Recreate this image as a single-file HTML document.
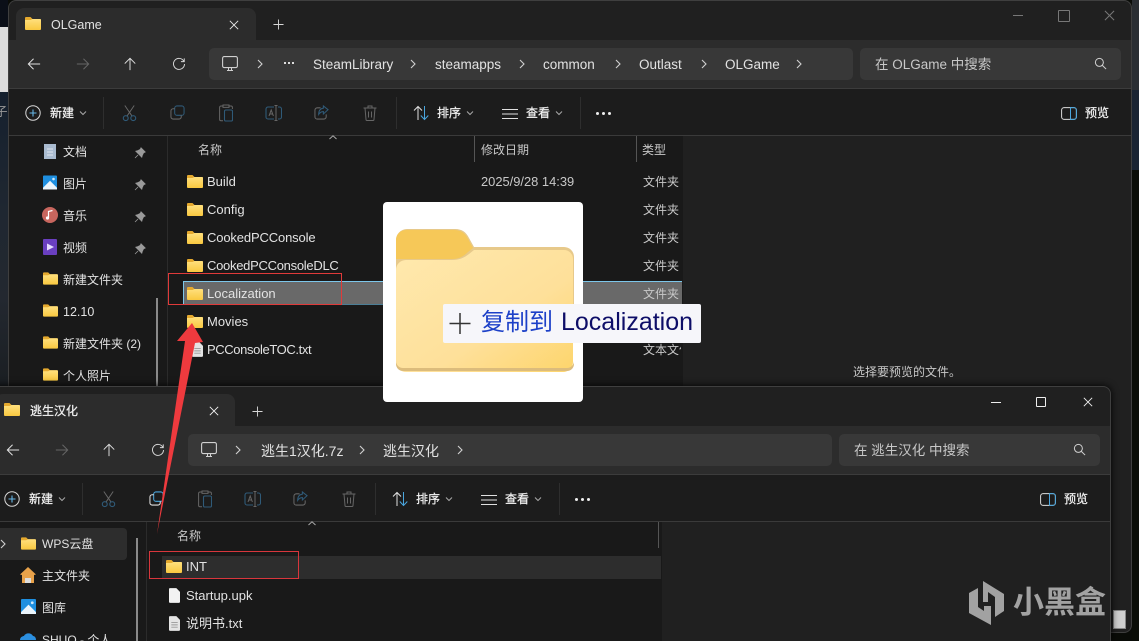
<!DOCTYPE html>
<html lang="zh-CN"><head><meta charset="utf-8"><title>Explorer</title>
<style>
html,body{margin:0;padding:0;width:1139px;height:641px;overflow:hidden;background:#0a0c08}
body{position:relative;font-family:"Liberation Sans","Noto Sans CJK SC",sans-serif;font-size:12.5px;color:#dcdcdc}
.a{position:absolute}
.t{position:absolute;white-space:nowrap;line-height:18px;transform:translateY(-8px)}
.win{position:absolute;width:1124px;height:633px;background:#202020;border:1px solid #3f3f3f;box-sizing:border-box;border-radius:8px;overflow:hidden}
.win>*{margin-left:-1px;margin-top:-1px}
.tab{position:absolute;left:8px;top:8px;width:240px;height:32px;background:#2c2c2c;border-radius:8px 8px 0 0}
.nav{position:absolute;left:0;top:40px;width:1124px;height:48px;background:#2c2c2c;border-bottom:1px solid #3c3c3c}
.tool{position:absolute;left:0;top:89px;width:1124px;height:46px;background:#1c1c1c;border-bottom:1px solid #3a3a3a}
.side{position:absolute;left:0;top:136px;width:159px;height:496px;background:#191919;border-right:1px solid #2b2b2b}
.list{position:absolute;left:160px;top:136px;width:515px;height:496px;background:#191919}
.box{position:absolute;top:48px;height:32px;background:#383838;border-radius:5px}
.sep{position:absolute;width:1px;height:32px;top:97px;background:#2e2e2e}
svg.i{position:absolute;overflow:visible;fill:none}
.hd{position:absolute;width:1px;height:26px;top:136px;background:#555}
.b{font-size:13px;color:#e2e2e2}
.p{font-size:13.5px;color:#e2e2e2}
.s{font-size:12px;color:#e2e2e2}
.t.k{font-size:12px;color:#f0f0f0;-webkit-text-stroke:.25px #f0f0f0;transform:translateY(-9px)}
.dim{color:#c8c8c8}
.dots{position:absolute;width:2px;height:2px;background:#ddd;box-shadow:4px 0 #ddd,8px 0 #ddd}
</style></head><body>
<svg width="0" height="0" style="position:absolute">
<defs>
<linearGradient id="fg" x1="0" y1="0" x2="0" y2="1"><stop offset="0" stop-color="#ffe07e"/><stop offset="1" stop-color="#f9c840"/></linearGradient>
<linearGradient id="bigf" x1="0" y1="0" x2="1" y2="1"><stop offset="0" stop-color="#ffe9ae"/><stop offset=".6" stop-color="#fee09a"/><stop offset="1" stop-color="#fdd56b"/></linearGradient>
<symbol id="folder" viewBox="0 0 16 13"><path d="M0 1a1 1 0 0 1 1-1h4.500l2 2H15a1 1 0 0 1 1 1v3H0z" fill="#e5a92e"/><path d="M0 3h5.500L7.500 2H15a1 1 0 0 1 1 1v9a1 1 0 0 1-1 1H1a1 1 0 0 1-1-1z" fill="url(#fg)"/></symbol>
<symbol id="back" viewBox="0 0 16 16"><path d="M15 8H1.500M7.500 2 1.500 8l6 6" stroke="currentColor" stroke-width="1.100" fill="none"/></symbol>
<symbol id="fwd" viewBox="0 0 16 16"><path d="M1 8h13.500M8.500 2l6 6-6 6" stroke="currentColor" stroke-width="1.100" fill="none"/></symbol>
<symbol id="up" viewBox="0 0 16 16"><path d="M8 15V1.500M2 7.500l6-6 6 6" stroke="currentColor" stroke-width="1.100" fill="none"/></symbol>
<symbol id="ref" viewBox="0 0 16 16"><path d="M13.600 5A6.300 6.300 0 1 0 14.300 8M14 1.500V5.300h-3.800" stroke="currentColor" stroke-width="1.100" fill="none"/></symbol>
<symbol id="mon" viewBox="0 0 16 16"><rect x=".6" y=".6" width="14.800" height="11" rx="1.600" stroke="#d0d0d0" stroke-width="1.100" fill="none"/><path d="M5 14.500h6M6.500 12v2M9.500 12v2" stroke="#d0d0d0" fill="none"/></symbol>
<symbol id="chev" viewBox="0 0 8 10"><path d="M2 1l4 4-4 4" stroke="#d0d0d0" stroke-width="1.100" fill="none"/></symbol>
<symbol id="dn" viewBox="0 0 8 8"><path d="M1 2.500l3 3 3-3" stroke="#a8a8a8" fill="none"/></symbol>
<symbol id="x" viewBox="0 0 12 12"><path d="M1 1l10 10M11 1 1 11" stroke="currentColor" stroke-width="1.100" fill="none"/></symbol>
<symbol id="plus" viewBox="0 0 12 12"><path d="M6 .5v11M.5 6h11" stroke="#d8d8d8" fill="none"/></symbol>
<symbol id="search" viewBox="0 0 14 14"><circle cx="5.800" cy="5.800" r="4.300" stroke="#d0d0d0" stroke-width="1.100" fill="none"/><path d="M9 9l4 4" stroke="#d0d0d0" stroke-width="1.100"/></symbol>
<symbol id="new" viewBox="0 0 16 16"><circle cx="8" cy="8" r="7.200" stroke="#d8d8d8" stroke-width="1" fill="none"/><path d="M8 4.500v7M4.500 8h7" stroke="#66b6e6" stroke-width="1.100"/></symbol>
<symbol id="cut" viewBox="0 0 16 18"><path d="M3 1l7.500 11M13 1 5.500 12" stroke="#6a6a6a" fill="none"/><circle cx="4" cy="14.500" r="2.600" stroke="#2f5a78" stroke-width="1.200" fill="none"/><circle cx="12" cy="14.500" r="2.600" stroke="#2f5a78" stroke-width="1.200" fill="none"/></symbol>
<symbol id="copy" viewBox="0 0 16 16"><rect x="5" y="1" width="10" height="10" rx="2.400" stroke="#2f5a78" stroke-width="1.100" fill="none"/><path d="M5 4H3.400A2.400 2.400 0 0 0 1 6.400v6.200A2.400 2.400 0 0 0 3.400 15h6.200a2.400 2.400 0 0 0 2.400-2.400V11" stroke="#666" stroke-width="1.100" fill="none"/></symbol>
<symbol id="copy2" viewBox="0 0 16 16"><rect x="5" y="1" width="10" height="10" rx="2.400" stroke="#4aa6de" stroke-width="1.100" fill="none"/><path d="M5 4H3.400A2.400 2.400 0 0 0 1 6.400v6.200A2.400 2.400 0 0 0 3.400 15h6.200a2.400 2.400 0 0 0 2.400-2.400V11" stroke="#e0e0e0" stroke-width="1.100" fill="none"/></symbol>
<symbol id="paste" viewBox="0 0 14 18"><path d="M4 2H2a1.400 1.400 0 0 0-1.400 1.400v12A1.400 1.400 0 0 0 2 16.800h2M4 1h6v2.400H4zM10 2h2a1.400 1.400 0 0 1 1.400 1.400V5" stroke="#666" fill="none"/><rect x="5.500" y="6" width="8" height="11" rx="1.300" stroke="#2f5a78" stroke-width="1.100" fill="none"/></symbol>
<symbol id="ren" viewBox="0 0 17 16"><path d="M9 2H3a2 2 0 0 0-2 2v8a2 2 0 0 0 2 2h6M13 2h1.500a2 2 0 0 1 2 2v8a2 2 0 0 1-2 2H13" stroke="#2f5a78" stroke-width="1.100" fill="none"/><path d="M9.500.5h3M11 .5v15M9.500 15.500h3M4 11l2.200-6L8.400 11M4.800 9h2.800" stroke="#666" fill="none"/></symbol>
<symbol id="share" viewBox="0 0 16 16"><path d="M7 3H3.500A2.500 2.500 0 0 0 1 5.500v7A2.500 2.500 0 0 0 3.500 15h7A2.500 2.500 0 0 0 13 12.500V10" stroke="#666" stroke-width="1.100" fill="none"/><path d="M15 5 10 1v2.400C6.500 3.800 5 6.500 5 10c1.500-2.300 3-3 5-3v2.600z" stroke="#2f5a78" stroke-width="1.100" fill="none"/></symbol>
<symbol id="del" viewBox="0 0 14 16"><path d="M.5 3h13M5 3V1h4v2M2 3l1 11.500a1 1 0 0 0 1 1h6a1 1 0 0 0 1-1L12 3M5.500 6.500v6M8.500 6.500v6" stroke="#666" fill="none"/></symbol>
<symbol id="sort" viewBox="0 0 17 16"><path d="M5 15V1.500M1 5.500l4-4 4 4" stroke="#e0e0e0" fill="none"/><path d="M11.500 1v13.500M7.800 10.500l3.700 4 3.800-4" stroke="#4aa6de" fill="none"/></symbol>
<symbol id="view" viewBox="0 0 16 12"><path d="M0 1.500h16M0 6h16M0 10.500h16" stroke="#e0e0e0" stroke-width="1.100"/></symbol>
<symbol id="prev" viewBox="0 0 16 13"><rect x=".6" y=".6" width="14.800" height="11.800" rx="2.500" stroke="#dcdcdc" stroke-width="1" fill="none"/><path d="M9.500.6h3.500a2.400 2.400 0 0 1 2.400 2.400v7a2.400 2.400 0 0 1-2.400 2.400H9.500z" stroke="#4aa6de" stroke-width="1" fill="none"/></symbol>
<symbol id="pin" viewBox="0 0 12 12"><path d="M7 .8 11.200 5 9.600 5.700 8.200 8.600 7.800 10.200 1.800 4.200 3.400 3.800 6.300 2.400z M4 8 1 11" fill="#9a9a9a" stroke="#9a9a9a" stroke-width=".8"/></symbol>
<symbol id="doc" viewBox="0 0 12 16"><path d="M0 1a1 1 0 0 1 1-1h7l4 4v11a1 1 0 0 1-1 1H1a1 1 0 0 1-1-1z" fill="#e4e4e4"/><path d="M2.500 7h7M2.500 9.500h7M2.500 12h7" stroke="#999"/></symbol>
<symbol id="file" viewBox="0 0 12 16"><path d="M0 1a1 1 0 0 1 1-1h7l4 4v11a1 1 0 0 1-1 1H1a1 1 0 0 1-1-1z" fill="#f2f2f2"/></symbol>
<symbol id="pic" viewBox="0 0 16 16"><rect width="16" height="16" rx="1" fill="#1e8fe0"/><path d="M0 14 8 6l8 8v2H0z" fill="#eaf4fb"/><circle cx="12" cy="4" r="1.500" fill="#cfe8fa"/></symbol>
</defs>
</svg>

<!-- background slivers -->
<div class="a" style="left:0;top:0;width:8px;height:27px;background:#0b0f18"></div>
<div class="a" style="left:0;top:27px;width:8px;height:65px;background:#dcdcdc"></div>
<div class="a" style="left:0;top:92px;width:8px;height:295px;background:linear-gradient(#15202e,#1f2731 40%,#232830 70%,#1a1e22)"></div>
<div class="t" style="left:-5px;top:111px;color:#999">子</div>
<div class="a" style="left:1132px;top:0;width:7px;height:90px;background:#2a2e33"></div>
<div class="a" style="left:1132px;top:90px;width:7px;height:80px;background:#1a2433"></div>
<div class="a" style="left:1132px;top:170px;width:7px;height:471px;background:#0a0d07"></div>

<!-- WINDOW 1 -->
<div class="win" style="left:8px;top:0">
 <div class="tab"></div>
 <svg class="i" style="left:17px;top:17px" width="16" height="13"><use href="#folder"/></svg>
 <div class="t b" style="left:43px;top:24px;font-size:12.500px">OLGame</div>
 <svg class="i" style="left:221px;top:20px;color:#e8e8e8" width="10" height="10"><use href="#x"/></svg>
 <svg class="i" style="left:265px;top:19px" width="11" height="11"><use href="#plus"/></svg>
 <div class="a" style="left:1005px;top:15px;width:10px;height:1px;background:#777"></div>
 <div class="a" style="left:1050px;top:10px;width:10px;height:10px;border:1px solid #777;border-radius:1px"></div>
 <svg class="i" style="left:1096px;top:10px;color:#777" width="11" height="11"><use href="#x"/></svg>
 <div class="nav"></div>
 <svg class="i" style="left:19px;top:57px;color:#e0e0e0" width="14" height="14"><use href="#back"/></svg>
 <svg class="i" style="left:68px;top:57px;color:#666" width="14" height="14"><use href="#fwd"/></svg>
 <svg class="i" style="left:115px;top:57px;color:#e0e0e0" width="14" height="14"><use href="#up"/></svg>
 <svg class="i" style="left:164px;top:57px;color:#d8d8d8" width="14" height="14"><use href="#ref"/></svg>
 <div class="box" style="left:201px;width:644px"></div>
 <div class="box" style="left:852px;width:261px"></div>
 <svg class="i" style="left:214px;top:56px" width="16" height="16"><use href="#mon"/></svg>
 <svg class="i" style="left:248px;top:59px" width="8" height="10"><use href="#chev"/></svg>
 <div class="dots" style="left:276px;top:62px"></div>
 <div class="t p" style="left:305px;top:64px">SteamLibrary</div>
 <svg class="i" style="left:401px;top:59px" width="8" height="10"><use href="#chev"/></svg>
 <div class="t p" style="left:427px;top:64px">steamapps</div>
 <svg class="i" style="left:510px;top:59px" width="8" height="10"><use href="#chev"/></svg>
 <div class="t p" style="left:535px;top:64px">common</div>
 <svg class="i" style="left:606px;top:59px" width="8" height="10"><use href="#chev"/></svg>
 <div class="t p" style="left:631px;top:64px">Outlast</div>
 <svg class="i" style="left:692px;top:59px" width="8" height="10"><use href="#chev"/></svg>
 <div class="t p" style="left:717px;top:64px">OLGame</div>
 <svg class="i" style="left:787px;top:59px" width="8" height="10"><use href="#chev"/></svg>
 <div class="t dim" style="left:867px;top:64px;font-size:13.500px">在 OLGame 中搜索</div>
 <svg class="i" style="left:1086px;top:57px" width="13" height="13"><use href="#search"/></svg>
 <div class="tool"></div>
 <svg class="i" style="left:17px;top:105px" width="16" height="16"><use href="#new"/></svg>
 <div class="t k" style="left:42px;top:113px">新建</div>
 <svg class="i" style="left:71px;top:109px" width="8" height="8"><use href="#dn"/></svg>
 <div class="sep" style="left:95px"></div>
 <svg class="i" style="left:114px;top:104px" width="15" height="18"><use href="#cut"/></svg>
 <svg class="i" style="left:162px;top:105px" width="15" height="15"><use href="#copy"/></svg>
 <svg class="i" style="left:211px;top:104px" width="14" height="18"><use href="#paste"/></svg>
 <svg class="i" style="left:257px;top:105px" width="17" height="16"><use href="#ren"/></svg>
 <svg class="i" style="left:306px;top:105px" width="15" height="15"><use href="#share"/></svg>
 <svg class="i" style="left:355px;top:105px" width="14" height="16"><use href="#del"/></svg>
 <div class="sep" style="left:388px"></div>
 <svg class="i" style="left:405px;top:105px" width="17" height="16"><use href="#sort"/></svg>
 <div class="t k" style="left:429px;top:113px">排序</div>
 <svg class="i" style="left:458px;top:109px" width="8" height="8"><use href="#dn"/></svg>
 <svg class="i" style="left:494px;top:108px" width="16" height="12"><use href="#view"/></svg>
 <div class="t k" style="left:518px;top:113px">查看</div>
 <svg class="i" style="left:547px;top:109px" width="8" height="8"><use href="#dn"/></svg>
 <div class="sep" style="left:572px"></div>
 <div class="a" style="left:588px;top:112px;width:3px;height:3px;background:#eee;border-radius:2px;box-shadow:6px 0 #eee,12px 0 #eee"></div>
 <svg class="i" style="left:1053px;top:107px" width="16" height="13"><use href="#prev"/></svg>
 <div class="t k" style="left:1077px;top:113px">预览</div>
 <div class="side"></div>
 <div class="list"></div>
 <svg class="i" style="left:321px;top:135px" width="8" height="5"><path d="M.5 4 4 .8 7.500 4" stroke="#aaa"/></svg>
 <div class="t dim" style="left:190px;top:149px;font-size:12px">名称</div>
 <div class="hd" style="left:466px"></div>
 <div class="t dim" style="left:473px;top:149px;font-size:12px">修改日期</div>
 <div class="hd" style="left:628px"></div>
 <div class="t dim" style="left:634px;top:149px;font-size:12px">类型</div>
 <!-- sidebar -->
 <svg class="i" style="left:36px;top:143px" width="12" height="16"><path d="M0 1h12v15H0z" fill="#a9bbd0"/><path d="M3 6h6M3 9h6M3 12h6" stroke="#dfe6ee"/></svg>
 <div class="t s" style="left:55px;top:151px">文档</div>
 <svg class="i" style="left:126px;top:147px" width="12" height="12"><use href="#pin"/></svg>
 <svg class="i" style="left:35px;top:175px" width="14" height="15"><use href="#pic"/></svg>
 <div class="t s" style="left:55px;top:183px">图片</div>
 <svg class="i" style="left:126px;top:179px" width="12" height="12"><use href="#pin"/></svg>
 <svg class="i" style="left:34px;top:207px" width="16" height="16"><circle cx="8" cy="8" r="8" fill="#c8665e"/><path d="M6.500 11V4.500l4-1" stroke="#fff" stroke-width="1.200"/><circle cx="5.500" cy="11" r="1.600" fill="#fff"/></svg>
 <div class="t s" style="left:55px;top:215px">音乐</div>
 <svg class="i" style="left:126px;top:211px" width="12" height="12"><use href="#pin"/></svg>
 <svg class="i" style="left:35px;top:239px" width="14" height="16"><rect width="14" height="16" rx="1" fill="#6a3fc0"/><path d="M4 4.500 11 8l-7 3.500z" fill="#e6dcff"/></svg>
 <div class="t s" style="left:55px;top:247px">视频</div>
 <svg class="i" style="left:126px;top:243px" width="12" height="12"><use href="#pin"/></svg>
 <svg class="i" style="left:35px;top:272px" width="15" height="13"><use href="#folder"/></svg>
 <div class="t s" style="left:55px;top:279px">新建文件夹</div>
 <svg class="i" style="left:35px;top:304px" width="15" height="13"><use href="#folder"/></svg>
 <div class="t s" style="left:55px;top:311px;font-size:12.500px">12.10</div>
 <svg class="i" style="left:35px;top:336px" width="15" height="13"><use href="#folder"/></svg>
 <div class="t s" style="left:55px;top:343px">新建文件夹 (2)</div>
 <svg class="i" style="left:35px;top:368px" width="15" height="13"><use href="#folder"/></svg>
 <div class="t s" style="left:55px;top:375px">个人照片</div>
 <div class="a" style="left:148px;top:298px;width:2px;height:88px;background:#8a8a8a"></div>
 <!-- rows -->
 <div class="a" style="left:175px;top:281px;width:499px;height:24px;box-sizing:border-box;background:#696969;border-top:1px solid #7cc6ea;border-left:1px solid #7cc6ea;border-bottom:1px solid #4b7e96"></div>
 <svg class="i" style="left:179px;top:175px" width="16" height="13"><use href="#folder"/></svg>
 <div class="t b" style="left:199px;top:181px">Build</div>
 <div class="t dim" style="left:473px;top:181px;font-size:12.900px">2025/9/28 14:39</div>
 <div class="t dim" style="left:635px;top:181px;font-size:12px">文件夹</div>
 <svg class="i" style="left:179px;top:203px" width="16" height="13"><use href="#folder"/></svg>
 <div class="t b" style="left:199px;top:209px">Config</div>
 <div class="t dim" style="left:635px;top:209px;font-size:12px">文件夹</div>
 <svg class="i" style="left:179px;top:231px" width="16" height="13"><use href="#folder"/></svg>
 <div class="t b" style="left:199px;top:237px;letter-spacing:-.14px">CookedPCConsole</div>
 <div class="t dim" style="left:635px;top:237px;font-size:12px">文件夹</div>
 <svg class="i" style="left:179px;top:259px" width="16" height="13"><use href="#folder"/></svg>
 <div class="t b" style="left:199px;top:265px;letter-spacing:-.28px">CookedPCConsoleDLC</div>
 <div class="t dim" style="left:635px;top:265px;font-size:12px">文件夹</div>
 <svg class="i" style="left:179px;top:287px" width="16" height="13"><use href="#folder"/></svg>
 <div class="t b" style="left:199px;top:293px">Localization</div>
 <div class="t dim" style="left:635px;top:293px;font-size:12px">文件夹</div>
 <svg class="i" style="left:179px;top:315px" width="16" height="13"><use href="#folder"/></svg>
 <div class="t b" style="left:199px;top:321px">Movies</div>
 <svg class="i" style="left:184px;top:342px" width="11" height="15"><use href="#doc"/></svg>
 <div class="t b" style="left:199px;top:349px;letter-spacing:-.38px">PCConsoleTOC.txt</div>
 <div class="t dim" style="left:635px;top:349px;width:38px;overflow:hidden;font-size:12px">文本文件</div>
 <div class="t dim" style="left:845px;top:371px;font-size:12px">选择要预览的文件。</div>
 <div class="a" style="left:1105px;top:610px;width:13px;height:19px;background:#cfcfcf;border:1px solid #888;box-sizing:border-box"></div>
</div>

<!-- red rect win1 -->
<div class="a" style="left:168px;top:273px;width:174px;height:32px;box-sizing:border-box;border:1px solid #e03a3a"></div>

<!-- WINDOW 2 -->
<div class="win" style="left:-13px;top:386px;height:255px;border-bottom:0;border-radius:8px 8px 0 0;box-shadow:0 0 8px #000">
 <div class="tab"></div>
 <svg class="i" style="left:17px;top:17px" width="16" height="13"><use href="#folder"/></svg>
 <div class="t k" style="left:43px;top:25px">逃生汉化</div>
 <svg class="i" style="left:222px;top:20px;color:#f0f0f0" width="10" height="10"><use href="#x"/></svg>
 <svg class="i" style="left:265px;top:20px" width="11" height="11"><use href="#plus"/></svg>
 <div class="a" style="left:1004px;top:16px;width:10px;height:1px;background:#eee"></div>
 <div class="a" style="left:1049px;top:11px;width:8px;height:8px;border:1px solid #eee;border-radius:1px"></div>
 <svg class="i" style="left:1096px;top:11px;color:#eee" width="10" height="10"><use href="#x"/></svg>
 <div class="nav"></div>
 <svg class="i" style="left:19px;top:57px;color:#e0e0e0" width="14" height="14"><use href="#back"/></svg>
 <svg class="i" style="left:68px;top:57px;color:#666" width="14" height="14"><use href="#fwd"/></svg>
 <svg class="i" style="left:115px;top:57px;color:#e0e0e0" width="14" height="14"><use href="#up"/></svg>
 <svg class="i" style="left:164px;top:57px;color:#d8d8d8" width="14" height="14"><use href="#ref"/></svg>
 <div class="box" style="left:201px;width:644px"></div>
 <div class="box" style="left:852px;width:261px"></div>
 <svg class="i" style="left:214px;top:56px" width="16" height="16"><use href="#mon"/></svg>
 <svg class="i" style="left:247px;top:59px" width="8" height="10"><use href="#chev"/></svg>
 <div class="t" style="left:274px;top:64px;font-size:14px;color:#e2e2e2">逃生1汉化.7z</div>
 <svg class="i" style="left:371px;top:59px" width="8" height="10"><use href="#chev"/></svg>
 <div class="t" style="left:396px;top:64px;font-size:14px;color:#e2e2e2">逃生汉化</div>
 <svg class="i" style="left:469px;top:59px" width="8" height="10"><use href="#chev"/></svg>
 <div class="t dim" style="left:867px;top:64px;font-size:13.500px">在 逃生汉化 中搜索</div>
 <svg class="i" style="left:1086px;top:57px" width="13" height="13"><use href="#search"/></svg>
 <div class="tool"></div>
 <svg class="i" style="left:17px;top:105px" width="16" height="16"><use href="#new"/></svg>
 <div class="t k" style="left:42px;top:113px">新建</div>
 <svg class="i" style="left:71px;top:109px" width="8" height="8"><use href="#dn"/></svg>
 <div class="sep" style="left:95px"></div>
 <svg class="i" style="left:114px;top:104px" width="15" height="18"><use href="#cut"/></svg>
 <svg class="i" style="left:162px;top:105px" width="15" height="15"><use href="#copy2"/></svg>
 <svg class="i" style="left:211px;top:104px" width="14" height="18"><use href="#paste"/></svg>
 <svg class="i" style="left:257px;top:105px" width="17" height="16"><use href="#ren"/></svg>
 <svg class="i" style="left:306px;top:105px" width="15" height="15"><use href="#share"/></svg>
 <svg class="i" style="left:355px;top:105px" width="14" height="16"><use href="#del"/></svg>
 <div class="sep" style="left:388px"></div>
 <svg class="i" style="left:405px;top:105px" width="17" height="16"><use href="#sort"/></svg>
 <div class="t k" style="left:429px;top:113px">排序</div>
 <svg class="i" style="left:458px;top:109px" width="8" height="8"><use href="#dn"/></svg>
 <svg class="i" style="left:494px;top:108px" width="16" height="12"><use href="#view"/></svg>
 <div class="t k" style="left:518px;top:113px">查看</div>
 <svg class="i" style="left:547px;top:109px" width="8" height="8"><use href="#dn"/></svg>
 <div class="sep" style="left:572px"></div>
 <div class="a" style="left:588px;top:112px;width:3px;height:3px;background:#eee;border-radius:2px;box-shadow:6px 0 #eee,12px 0 #eee"></div>
 <svg class="i" style="left:1053px;top:107px" width="16" height="13"><use href="#prev"/></svg>
 <div class="t k" style="left:1077px;top:113px">预览</div>
 <div class="side" style="height:119px"></div>
 <div class="list" style="height:119px"></div>
 <div class="a" style="left:0;top:142px;width:140px;height:32px;background:#2d2d2d;border-radius:0 4px 4px 0"></div>
 <svg class="i" style="left:12px;top:153px" width="8" height="10"><use href="#chev"/></svg>
 <svg class="i" style="left:34px;top:151px" width="15" height="13"><use href="#folder"/></svg>
 <div class="t s" style="left:55px;top:157px">WPS云盘</div>
 <svg class="i" style="left:33px;top:181px" width="16" height="16"><path d="M8 0 16 7.500 14 8v8h-3.500v-5h-5v5H2V8L0 7.500z" fill="#e8a24a"/><path d="M5 11h6v5H5z" fill="#ddd"/></svg>
 <div class="t s" style="left:55px;top:189px">主文件夹</div>
 <svg class="i" style="left:34px;top:213px" width="15" height="15"><use href="#pic"/></svg>
 <div class="t s" style="left:55px;top:221px">图库</div>
 <svg class="i" style="left:33px;top:245px" width="16" height="10"><path d="M0 9c0-3 3-4 4-4 1-3 7-4 9 0 2 0 3 2 3 4z" fill="#2b8fe0"/></svg>
 <div class="t s" style="left:55px;top:253px">SHUO - 个人</div>
 <div class="a" style="left:149px;top:152px;width:2px;height:103px;background:#8a8a8a"></div>
 <svg class="i" style="left:321px;top:135px" width="8" height="5"><path d="M.5 4 4 .8 7.500 4" stroke="#aaa"/></svg>
 <div class="t dim" style="left:190px;top:149px;font-size:12px">名称</div>
 <div class="hd" style="left:671px"></div>
 <div class="a" style="left:175px;top:170px;width:499px;height:23px;background:#2d2d2d"></div>
 <svg class="i" style="left:179px;top:174px" width="16" height="13"><use href="#folder"/></svg>
 <div class="t b" style="left:199px;top:180px">INT</div>
 <svg class="i" style="left:182px;top:202px" width="11" height="15"><use href="#file"/></svg>
 <div class="t b" style="left:199px;top:209px">Startup.upk</div>
 <svg class="i" style="left:182px;top:230px" width="11" height="15"><use href="#doc"/></svg>
 <div class="t b" style="left:199px;top:237px">说明书.txt</div>
</div>

<!-- red rect win2 -->
<div class="a" style="left:149px;top:551px;width:150px;height:28px;box-sizing:border-box;border:1px solid #d8363c"></div>

<!-- Arrow -->
<svg class="i" style="left:0;top:0" width="1139" height="641"><polygon points="192,323 203,342 195,343 157,534 185,341 177,341" fill="#ee3a3e"/></svg>

<!-- Drag image -->
<div class="a" style="left:383px;top:202px;width:200px;height:200px;background:#fff;border-radius:4px"></div>
<svg class="i" style="left:396px;top:228px" width="178" height="143" viewBox="0 0 178 143">
 <path d="M0 12A11 11 0 0 1 11 1H59c7 0 11 3 14 9l5 9h90a10 10 0 0 1 10 10V80H0z" fill="#e7c98a"/>
 <path d="M0 12A10 10 0 0 1 10 2H58c7 0 11 3 14 9l5 9-5 4c-5 5-10 7-16 7H0z" fill="#f6c858"/>
 <path d="M0 42a10 10 0 0 1 10-10h46c7 0 12-2 17-6l5-4h90a9 9 0 0 1 9 9v103a10 10 0 0 1-10 10H10a10 10 0 0 1-10-10z" fill="url(#bigf)"/>
 <path d="M0 136a7 7 0 0 0 7 7h164a7 7 0 0 0 7-7v-3a7 7 0 0 1-7 7H7a7 7 0 0 1-7-7z" fill="#dcbc7c"/>
</svg>
<div class="a" style="left:443px;top:304px;width:258px;height:39px;background:#f6f6fa;border-radius:2px"></div>
<svg class="i" style="left:449px;top:312px" width="22" height="22"><path d="M11 1v21M.5 11.500h21" stroke="#333" stroke-width="1.500"/></svg>
<div class="a" style="left:481px;top:304px;line-height:37px;white-space:nowrap;font-size:24px;color:#1c40c8">复制到</div>
<div class="a" style="left:561px;top:304px;line-height:37px;white-space:nowrap;font-size:25px;color:#0e0e68">Localization</div>

<!-- Watermark -->
<svg class="i" style="left:0;top:0" width="1139" height="641"><polygon points="983,581 1004,594 1004,611 995,617 995,597 988,592 988,602 983,602" fill="#a2a2a2"/><polygon points="969,593 978,588 978,607 984,611 984,606 991,606 991,625 969,613" fill="#a2a2a2"/></svg>
<div class="a" style="left:1013px;top:585px;font-size:31px;line-height:36px;white-space:nowrap;font-weight:bold;color:#a2a2a2">小黑盒</div>
</body></html>
